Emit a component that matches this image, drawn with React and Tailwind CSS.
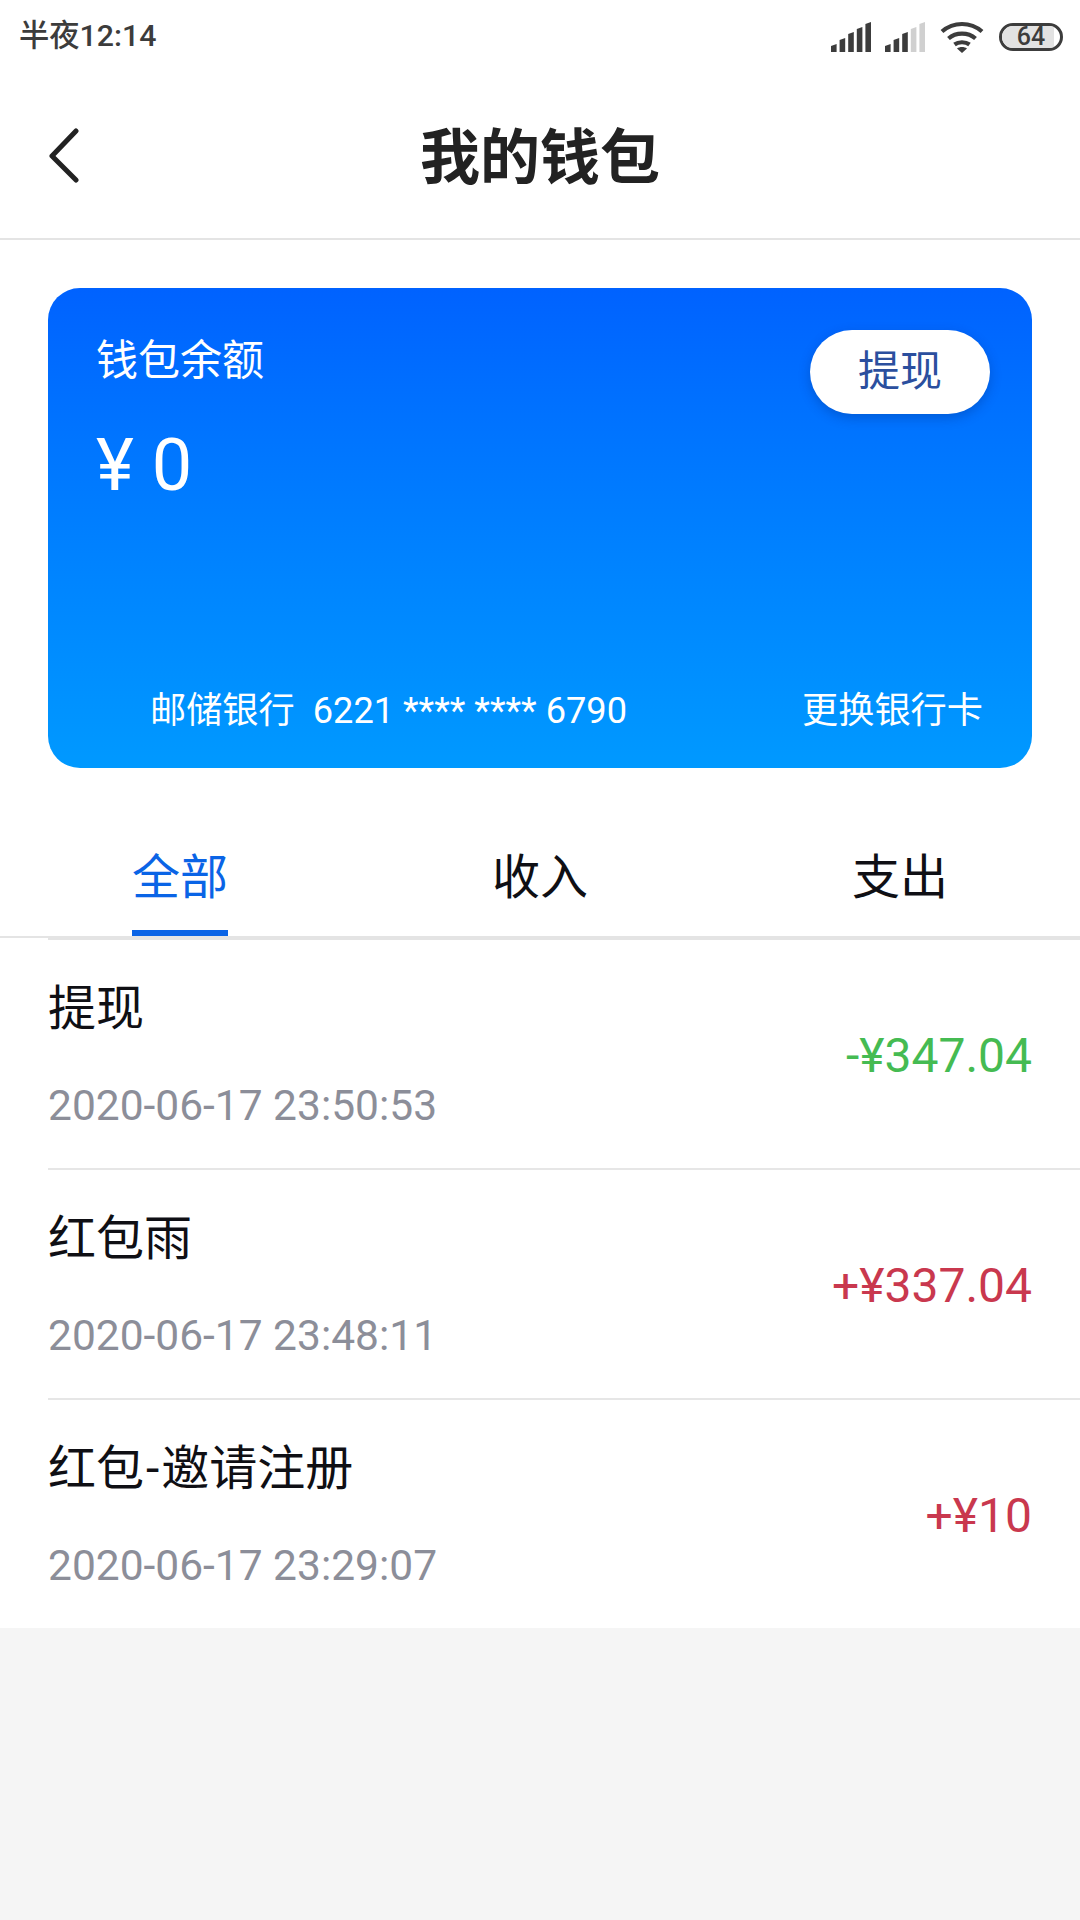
const cjk = "font-['Roboto','Noto_Sans_CJK_SC',sans-serif]";

function Bars({ dim }) {
  const hs = [7, 13, 19, 24, 29];
  return (
    <svg width="40" height="30" viewBox="0 0 40 30">
      {hs.map((h, i) => {
        const x = i * 8.6;
        return <path key={i} d={`M${x} 30V${29 - h + 2}L${x + 5.6} ${29 - h}V30H${x}z`} fill={dim && i > 2 ? "#d0d0d0" : "#3c3c3c"} />;
      })}
    </svg>
  );
}

function Wifi() {
  return (
    <svg width="44" height="32" viewBox="0 0 44 32" fill="none" stroke="#3c3c3c" strokeWidth="4.2">
      <path d="M2 10.5C13.500 0.500 30.500 0.500 42 10.500" />
      <path d="M8.500 17.500C16 11 28 11 35.500 17.500" />
      <path d="M14.500 23.500C18.500 20.500 25.500 20.500 29.500 23.500" />
      <path d="M22 32l-5-4.500C19.500 25.500 24.500 25.500 27 27.500z" fill="#3c3c3c" stroke="none" />
    </svg>
  );
}

function Row({ title, date, amount, color, last, h, first }) {
  return (
    <div className={`ml-12 flex items-center justify-between pr-12 ${h} ${first ? "border-t-2 border-t-[#e4e4e4]" : ""} ${last ? "" : "border-b-2 border-b-[#e6e6e6]"}`}>
      <div className="mt-[3px]">
        <div className="text-[48px] leading-[56px] text-[#0f0f14]">{title}</div>
        <div className="text-[42.500px] leading-[50px] text-[#8c8e99] mt-[44px]">{date}</div>
      </div>
      <div className={`text-[48px] leading-[56px] ${color} mt-[4px]`}>{amount}</div>
    </div>
  );
}

export default function App() {
  return (
    <div className={`w-[1080px] h-[1920px] bg-[#f5f5f5] flex flex-col ${cjk}`}>
      <div className="bg-white">
        <div className="h-[70px] flex items-center justify-between pl-[19px] pr-[17px]">
          <span className="text-[30.300px] font-medium text-[#3c3c3c] leading-none mt-[3px]">半夜12:14</span>
          <div className="flex items-center mt-[3px]">
            <Bars />
            <div className="w-[14px]" />
            <Bars dim />
            <div className="w-[15px]" />
            <Wifi />
            <div className="w-[15px]" />
            <div className="relative w-[64px] h-[28px] rounded-full border-[3px] border-[#3c3c3c] overflow-hidden flex items-center justify-center">
              <div className="absolute left-0 top-0 bottom-0 w-[52px] bg-[#e2e2e2]" />
              <span className="relative text-[25px] font-medium text-[#3c3c3c] leading-none">64</span>
            </div>
          </div>
        </div>
        <div className="relative h-[170px] flex items-center justify-center border-b-2 border-[#e4e4e4]">
          <svg className="absolute left-[48px] top-[58px]" width="32" height="58" viewBox="0 0 32 58" fill="none" stroke="#222" strokeWidth="5" strokeLinecap="round" strokeLinejoin="round">
            <path d="M28 3L4 28L28 52" />
          </svg>
          <span className="text-[60px] font-bold text-[#222] leading-none mt-[10px]">我的钱包</span>
        </div>
        <div className="px-12 pt-12">
          <div className="relative h-[480px] rounded-[32px] bg-gradient-to-b from-[#0062ff] to-[#0099ff] flex flex-col text-white">
            <div className="pl-[48px] pt-[48px] text-[42px] leading-[50px]">钱包余额</div>
            <div className="pl-[48px] pt-[38px] text-[72px] leading-[84px]">¥ 0</div>
            <button className="absolute right-[42px] top-[42px] w-[180px] h-[84px] rounded-full bg-white text-[#2b4f9e] text-[42px] leading-none shadow-[0_4px_12px_rgba(0,40,120,0.3)]">提现</button>
            <div className="mt-auto pb-[35px] flex items-center justify-between pl-[102px] pr-[49px] text-[36.200px] leading-[44px]">
              <span className="whitespace-pre">邮储银行  6221 **** **** 6790</span>
              <span>更换银行卡</span>
            </div>
          </div>
        </div>
        <div className="relative h-[170px] grid grid-cols-3 border-b-2 border-[#e4e4e4]">
          <div className="relative flex justify-center items-center">
            <span className="text-[48px] text-[#0a64e6] leading-none mt-[51px]">全部</span>
            <div className="absolute bottom-0 left-[132px] w-[96px] h-[6px] bg-[#0a64e6]" />
          </div>
          <div className="flex justify-center items-center">
            <span className="text-[48px] text-[#0f0f14] leading-none mt-[51px]">收入</span>
          </div>
          <div className="flex justify-center items-center">
            <span className="text-[48px] text-[#0f0f14] leading-none mt-[51px]">支出</span>
          </div>
        </div>
        <Row first h="h-[232px]" title="提现" date="2020-06-17 23:50:53" amount="-¥347.04" color="text-[#45bb52]" />
        <Row h="h-[230px]" title="红包雨" date="2020-06-17 23:48:11" amount="+¥337.04" color="text-[#c9384e]" />
        <Row h="h-[228px]" title={<>红包<span className="mx-[2px]">-</span>邀请注册</>} date="2020-06-17 23:29:07" amount="+¥10" color="text-[#c9384e]" last />
      </div>
    </div>
  );
}
